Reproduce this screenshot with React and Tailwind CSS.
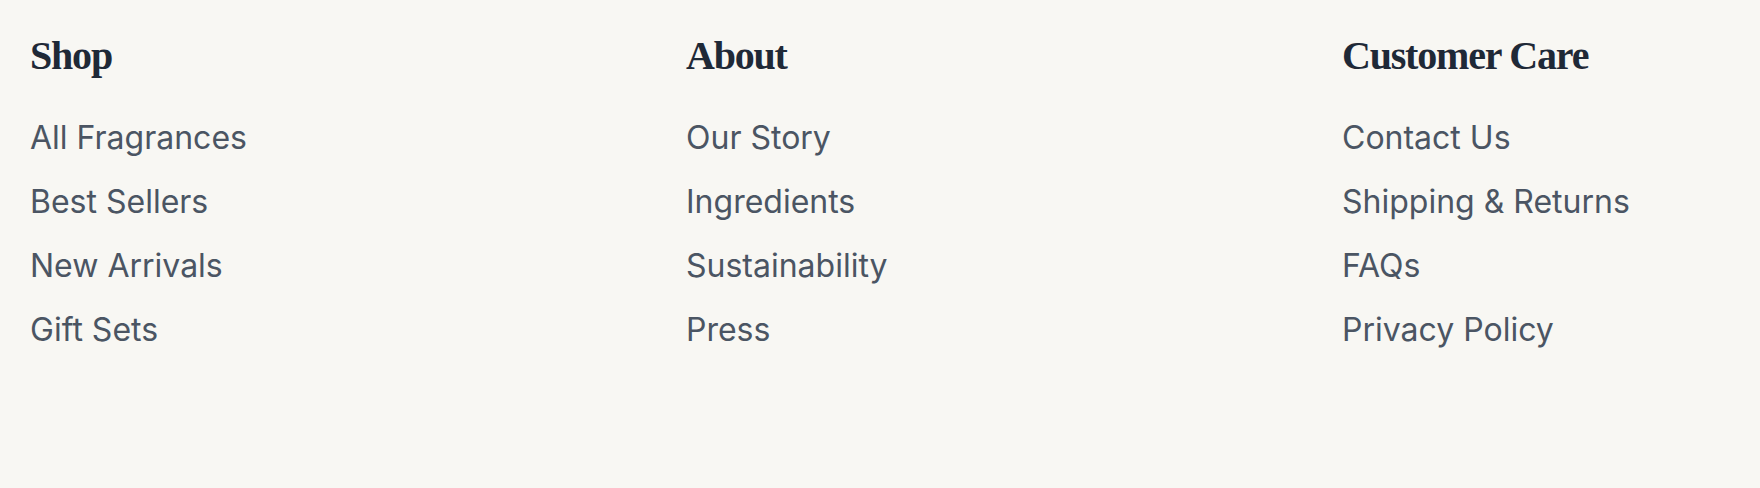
const columns = [
  {
    title: 'Shop',
    links: ['All Fragrances', 'Best Sellers', 'New Arrivals', 'Gift Sets'],
  },
  {
    title: 'About',
    links: ['Our Story', 'Ingredients', 'Sustainability', 'Press'],
  },
  {
    title: 'Customer Care',
    links: ['Contact Us', 'Shipping & Returns', 'FAQs', 'Privacy Policy'],
  },
];

export default function App() {
  return (
    <footer className="min-h-[488px] w-full overflow-hidden bg-[#f8f7f3] pl-[30px] pt-[28px]">
      <div className="flex">
        {columns.map((col) => (
          <div key={col.title} className="w-[656px] shrink-0">
            <h3 className="mb-[30px] font-['Liberation_Serif',serif] text-[40px] leading-[56px] font-bold tracking-[-1.2px] text-[#1f2937]">
              {col.title}
            </h3>
            <ul className="flex flex-col gap-4">
              {col.links.map((link) => (
                <li key={link}>
                  <a
                    href="#"
                    className="font-['Inter',sans-serif] text-[32px] leading-[48px] text-[#4b5563]"
                  >
                    {link}
                  </a>
                </li>
              ))}
            </ul>
          </div>
        ))}
      </div>
    </footer>
  );
}
